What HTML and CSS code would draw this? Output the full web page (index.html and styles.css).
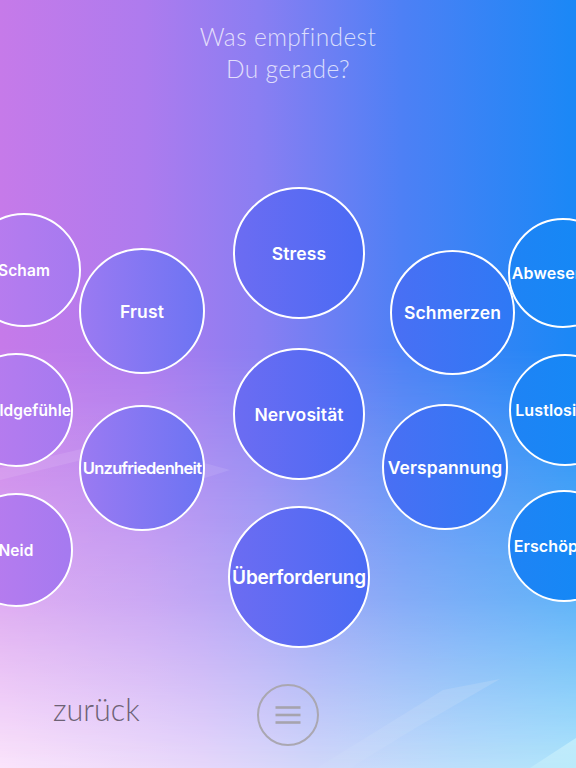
FILE: index.html
```html
<!DOCTYPE html>
<html lang="de">
<head>
<meta charset="utf-8">
<title>Was empfindest Du gerade?</title>
<link rel="stylesheet" href="styles.css">
</head>
<body>
<div class="screen">
  <header class="header">
    <h1 class="title">Was empfindest<br>Du gerade?</h1>
  </header>
  <main class="canvas">
    <div class="bubble b-left" style="left:-33px;top:113px;width:114px;height:114px">Scham</div>
    <div class="bubble b-left" style="left:-41px;top:253px;width:114px;height:114px">Schuldgefühle</div>
    <div class="bubble b-left" style="left:-41px;top:393px;width:114px;height:114px">Neid</div>
    <div class="bubble b-second" style="left:79px;top:148px;width:126px;height:126px">Frust</div>
    <div class="bubble b-second condensed" style="left:79px;top:305px;width:126px;height:126px">Unzufriedenheit</div>
    <div class="bubble b-center" style="left:233px;top:87px;width:132px;height:132px">Stress</div>
    <div class="bubble b-center" style="left:233px;top:248px;width:132px;height:132px">Nervosität</div>
    <div class="bubble b-center large" style="left:228px;top:406px;width:142px;height:142px">Überforderung</div>
    <div class="bubble b-fourth" style="left:390px;top:150px;width:125px;height:125px">Schmerzen</div>
    <div class="bubble b-fourth" style="left:382px;top:304px;width:126px;height:126px">Verspannung</div>
    <div class="bubble b-right" style="left:508px;top:118px;width:110px;height:110px">Abwesenheit</div>
    <div class="bubble b-right" style="left:509px;top:254px;width:112px;height:112px">Lustlosigkeit</div>
    <div class="bubble b-right" style="left:508px;top:390px;width:112px;height:112px">Erschöpfung</div>
  </main>
  <footer class="footer">
    <a class="back">zurück</a>
    <button class="menu" aria-label="Menü">
      <svg width="28" height="20" viewBox="0 0 28 20">
        <line x1="1.5" y1="2.5" x2="26.5" y2="2.5"/>
        <line x1="1.5" y1="10" x2="26.5" y2="10"/>
        <line x1="1.5" y1="17.5" x2="26.5" y2="17.5"/>
      </svg>
    </button>
    <span class="spacer"></span>
  </footer>
</div>
</body>
</html>
```

FILE: styles.css
```css
html, body {
  margin: 0;
  padding: 0;
}
body {
  width: 576px;
  height: 768px;
  overflow: hidden;
  font-family: "Inter", "Lato", sans-serif;
}
.screen {
  position: relative;
  width: 576px;
  height: 768px;
  overflow: hidden;
  display: flex;
  flex-direction: column;
  background:
    url("data:image/svg+xml;utf8,<svg xmlns='http://www.w3.org/2000/svg' width='576' height='768'><polygon points='0,468 120,440 230,470 205,478 90,458 0,480' fill='white' fill-opacity='0.10'/><polygon points='500,679 443,690 317,768 350,768 417,727' fill='%238ea8ef' fill-opacity='0.55'/><polygon points='576,738 530,768 576,768' fill='white' fill-opacity='0.9'/></svg>") no-repeat,
    linear-gradient(90deg, #c67ae9 0%, #ae7bee 25%, #8a7ef2 45%, #4d80f5 70%, #1a88f6 100%);
}
.screen::before {
  content: "";
  position: absolute;
  inset: 0;
  background: linear-gradient(90deg, #fdeafc 0%, #eadcfb 35%, #d5dcfa 55%, #c2e4fb 80%, #b8eafb 100%);
  -webkit-mask-image: linear-gradient(180deg, transparent 45%, rgba(0,0,0,0.45) 78%, rgba(0,0,0,0.95) 100%);
  mask-image: linear-gradient(180deg, transparent 45%, rgba(0,0,0,0.45) 78%, rgba(0,0,0,0.95) 100%);
  z-index: 0;
}
.header {
  position: relative;
  z-index: 1;
  height: 100px;
  box-sizing: border-box;
  padding-top: 21px;
  text-align: center;
}
.title {
  margin: 0;
  font-family: "Lato", sans-serif;
  font-weight: 300;
  font-size: 24.5px;
  line-height: 32px;
  letter-spacing: 0.4px;
  color: rgba(255, 255, 255, 0.75);
}
.canvas {
  position: relative;
  z-index: 1;
  flex: 1;
}
.bubble {
  position: absolute;
  box-sizing: border-box;
  border: 2px solid #ffffff;
  border-radius: 50%;
  display: flex;
  align-items: center;
  justify-content: center;
  white-space: nowrap;
  color: #ffffff;
  font-weight: 600;
  font-size: 17.5px;
  letter-spacing: 0.1px;
}
.bubble.large {
  font-size: 19px;
  letter-spacing: -0.2px;
}
.bubble.condensed {
  font-size: 16.5px;
  letter-spacing: -0.7px;
}
.b-left {
  font-size: 15.5px;
  background: linear-gradient(90deg, #bd7cee, #a57af0);
}
.b-second {
  background: linear-gradient(90deg, #9b7af2, #6c74f3);
}
.b-center {
  background: linear-gradient(90deg, #6c6cf2, #4a6bf4);
}
.b-fourth {
  background: linear-gradient(90deg, #4a6ff4, #2e79f5);
}
.b-right {
  font-size: 16px;
  background: linear-gradient(90deg, #1f83f5, #0f8bf6);
}
.footer {
  position: relative;
  z-index: 1;
  height: 100px;
  box-sizing: border-box;
  padding-top: 16px;
  display: grid;
  grid-template-columns: 1fr auto 1fr;
  align-items: start;
}
.back {
  padding-left: 53px;
  padding-top: 7px;
  font-family: "Lato", sans-serif;
  font-weight: 300;
  font-size: 30.5px;
  color: #6d6275;
}
.menu {
  width: 62px;
  height: 62px;
  box-sizing: border-box;
  border: 2px solid #aaa7b1;
  border-radius: 50%;
  background: transparent;
  padding: 0;
  display: flex;
  align-items: center;
  justify-content: center;
}
.menu svg line {
  stroke: #a6a3ad;
  stroke-width: 2.6;
}
```
